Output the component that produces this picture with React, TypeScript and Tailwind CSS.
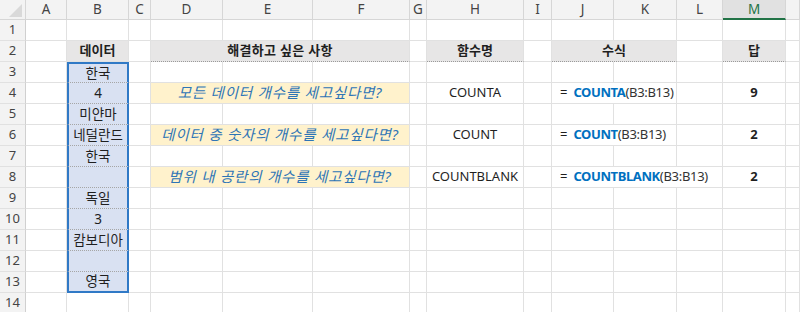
import React from "react";

type CellProps = {
  w: string;
  b?: string;
  className?: string;
  children?: React.ReactNode;
};

const GRID = "border-r border-b border-[#e1e1e1]";

function Cell({ w, b = GRID, className = "justify-center", children }: CellProps) {
  return (
    <div className={`${w} h-full shrink-0 flex items-center overflow-visible whitespace-nowrap ${b} ${className}`}>
      {children}
    </div>
  );
}

const HDR = "border-r border-b border-[#d6d6d6]";

function RowHead({ n }: { n: number }) {
  return (
    <Cell w="w-[26px]" b="border-r border-b border-r-[#d0d0d0] border-b-[#e1e1e1]" className="justify-center bg-[#f3f3f3] text-[#444] text-[13px]">
      {n}
    </Cell>
  );
}

const BMID = "border-x-2 border-x-[#3079c6] border-b border-b-[#a6a6a6] [border-bottom-style:dotted]";
const BTOP = "border-x-2 border-t-2 border-x-[#3079c6] border-t-[#3079c6] border-b border-b-[#a6a6a6] [border-bottom-style:dotted]";
const BBOT = "border-x-2 border-b-2 border-x-[#3079c6] border-b-[#3079c6]";
const GRAYHDR = "border-r border-b border-r-[#e1e1e1] border-b-[#9a9a9a] [border-bottom-style:dotted]";

function BCell({ v, b }: { v: string; b: string }) {
  return (
    <Cell w="w-[62px]" b={b} className="justify-center bg-[#d9e1f2] text-[13.5px]">
      {v}
    </Cell>
  );
}

function Row({ n, children }: { n: number; children: React.ReactNode }) {
  return (
    <div className="flex h-[21px]">
      <RowHead n={n} />
      {children}
    </div>
  );
}

function Blank({ w }: { w: string }) {
  return <Cell w={w} />;
}

function Formula({ fn }: { fn: string }) {
  return (
    <>
      <span className="pl-[8px]">=</span>
      <span className="ml-[6px] font-bold text-[#0070c0] tracking-[-0.4px]">{fn}</span>
      <span className="tracking-[-0.3px] text-[#333]">(B3:B13)</span>
    </>
  );
}

function Question({ t }: { t: string }) {
  return (
    <Cell w="w-[259px]" className="justify-center bg-[#fff2cc] italic text-[14.5px] tracking-[0.8px] text-[#2e75b6]">
      {t}
    </Cell>
  );
}

export default function App() {
  const bVals: [string, string][] = [
    ["한국", BTOP],
    ["4", BMID],
    ["미얀마", BMID],
    ["네덜란드", BMID],
    ["한국", BMID],
    ["", BMID],
    ["독일", BMID],
    ["3", BMID],
    ["캄보디아", BMID],
    ["", BMID],
    ["영국", BBOT],
  ];

  const rest = (r: number) => {
    if (r === 4)
      return (
        <>
          <Blank w="w-[22px]" />
          <Question t="모든 데이터 개수를 세고싶다면?" />
          <Blank w="w-[17px]" />
          <Cell w="w-[97px]">COUNTA</Cell>
          <Blank w="w-[28px]" />
          <Cell w="w-[125px]" className="justify-start">
            <Formula fn="COUNTA" />
          </Cell>
          <Blank w="w-[46px]" />
          <Cell w="w-[63px]" className="justify-center font-bold">9</Cell>
          <Blank w="w-[14px]" />
        </>
      );
    if (r === 6)
      return (
        <>
          <Blank w="w-[22px]" />
          <Question t="데이터 중 숫자의 개수를 세고싶다면?" />
          <Blank w="w-[17px]" />
          <Cell w="w-[97px]">COUNT</Cell>
          <Blank w="w-[28px]" />
          <Cell w="w-[125px]" className="justify-start">
            <Formula fn="COUNT" />
          </Cell>
          <Blank w="w-[46px]" />
          <Cell w="w-[63px]" className="justify-center font-bold">2</Cell>
          <Blank w="w-[14px]" />
        </>
      );
    if (r === 8)
      return (
        <>
          <Blank w="w-[22px]" />
          <Question t="범위 내 공란의 개수를 세고싶다면?" />
          <Blank w="w-[17px]" />
          <Cell w="w-[97px]">COUNTBLANK</Cell>
          <Blank w="w-[28px]" />
          <Cell w="w-[171px]" className="justify-start">
            <Formula fn="COUNTBLANK" />
          </Cell>
          <Cell w="w-[63px]" className="justify-center font-bold">2</Cell>
          <Blank w="w-[14px]" />
        </>
      );
    return (
      <>
        <Blank w="w-[22px]" />
        <Blank w="w-[72px]" />
        <Blank w="w-[90px]" />
        <Blank w="w-[97px]" />
        <Blank w="w-[17px]" />
        <Blank w="w-[97px]" />
        <Blank w="w-[28px]" />
        <Blank w="w-[62px]" />
        <Blank w="w-[63px]" />
        <Blank w="w-[46px]" />
        <Blank w="w-[63px]" />
        <Blank w="w-[14px]" />
      </>
    );
  };

  const full = (
    <>
      <Blank w="w-[41px]" />
      <Blank w="w-[62px]" />
      <Blank w="w-[22px]" />
      <Blank w="w-[72px]" />
      <Blank w="w-[90px]" />
      <Blank w="w-[97px]" />
      <Blank w="w-[17px]" />
      <Blank w="w-[97px]" />
      <Blank w="w-[28px]" />
      <Blank w="w-[62px]" />
      <Blank w="w-[63px]" />
      <Blank w="w-[46px]" />
      <Blank w="w-[63px]" />
      <Blank w="w-[14px]" />
    </>
  );

  return (
    <div className="w-[800px] h-[312px] overflow-hidden bg-white font-['Noto_Sans','Noto_Sans_CJK_KR',sans-serif] text-[13px] text-[#1f1f1f]">
      {/* column headers */}
      <div className="flex h-[20px] text-[13.5px] text-[#444]">
        <div className={`w-[26px] h-full shrink-0 bg-[#f3f3f3] ${HDR} flex items-end justify-end`}>
          <svg width="25" height="19" viewBox="0 0 25 19">
            <polygon points="22,4 22,17 9,17" fill="#d9d9d9" />
          </svg>
        </div>
        <Cell w="w-[41px]" b={HDR} className="justify-center bg-[#f3f3f3]">A</Cell>
        <Cell w="w-[62px]" b={HDR} className="justify-center bg-[#f3f3f3]">B</Cell>
        <Cell w="w-[22px]" b={HDR} className="justify-center bg-[#f3f3f3]">C</Cell>
        <Cell w="w-[72px]" b={HDR} className="justify-center bg-[#f3f3f3]">D</Cell>
        <Cell w="w-[90px]" b={HDR} className="justify-center bg-[#f3f3f3]">E</Cell>
        <Cell w="w-[97px]" b={HDR} className="justify-center bg-[#f3f3f3]">F</Cell>
        <Cell w="w-[17px]" b={HDR} className="justify-center bg-[#f3f3f3]">G</Cell>
        <Cell w="w-[97px]" b={HDR} className="justify-center bg-[#f3f3f3]">H</Cell>
        <Cell w="w-[28px]" b={HDR} className="justify-center bg-[#f3f3f3]">I</Cell>
        <Cell w="w-[62px]" b={HDR} className="justify-center bg-[#f3f3f3]">J</Cell>
        <Cell w="w-[63px]" b={HDR} className="justify-center bg-[#f3f3f3]">K</Cell>
        <Cell w="w-[46px]" b={HDR} className="justify-center bg-[#f3f3f3]">L</Cell>
        <Cell
          w="w-[63px]"
          b="border-r border-b-2 border-r-[#d6d6d6] border-b-[#217346]"
          className="justify-center bg-[#e1e1e1] text-[#217346]"
        >
          M
        </Cell>
        <Cell w="w-[14px]" b={HDR} className="justify-center bg-[#f3f3f3]" />
      </div>

      <Row n={1}>{full}</Row>

      <Row n={2}>
        <Blank w="w-[41px]" />
        <Cell w="w-[62px]" className="justify-center bg-[#e7e6e6] font-bold">데이터</Cell>
        <Blank w="w-[22px]" />
        <Cell w="w-[259px]" b={GRAYHDR} className="justify-center bg-[#e7e6e6] font-bold tracking-[0.3px]">
          해결하고 싶은 사항
        </Cell>
        <Blank w="w-[17px]" />
        <Cell w="w-[97px]" b={GRAYHDR} className="justify-center bg-[#e7e6e6] font-bold">함수명</Cell>
        <Blank w="w-[28px]" />
        <Cell w="w-[125px]" b={GRAYHDR} className="justify-center bg-[#e7e6e6] font-bold">수식</Cell>
        <Blank w="w-[46px]" />
        <Cell w="w-[63px]" b={GRAYHDR} className="justify-center bg-[#e7e6e6] font-bold">답</Cell>
        <Blank w="w-[14px]" />
      </Row>

      {bVals.map(([v, b], i) => (
        <Row key={i} n={i + 3}>
          <Blank w="w-[41px]" />
          <BCell v={v} b={b} />
          {rest(i + 3)}
        </Row>
      ))}

      <Row n={14}>{full}</Row>
    </div>
  );
}
